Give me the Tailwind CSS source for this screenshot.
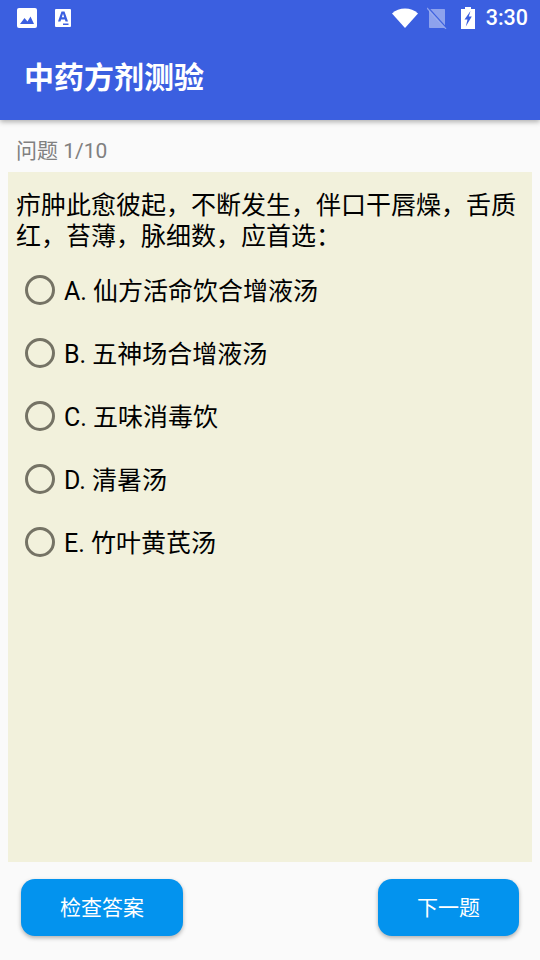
<!DOCTYPE html>
<html lang="zh">
<head>
  <meta charset="UTF-8">
  <meta name="viewport" content="width=device-width, initial-scale=1.0">
  <title>中药方剂测验</title>
  <script src="https://cdn.jsdelivr.net/npm/@tailwindcss/browser@4"></script>
</head>
<body class="w-[540px] h-[960px] overflow-hidden bg-[#fafafa] flex flex-col font-['Roboto','Noto_Sans_CJK_SC',sans-serif]">
  <!-- Header -->
  <header class="h-[120px] shrink-0 bg-[#3b5fe0] shadow-[0_2px_5px_rgba(0,0,0,0.3)] z-10 flex flex-col">
    <div class="h-[36px] pl-[17px] pr-[12px] flex items-center">
      <svg class="w-[20px] h-[20px]" viewBox="0 0 20 20"><rect width="20" height="20" rx="2" fill="#fff"/><path d="M3 16l4.500-6 3 3.500 3-5L17 16z" fill="#3b5fe0"/></svg>
      <svg class="w-[16px] h-[18px] ml-[18px]" viewBox="0 0 16 18"><rect width="16" height="18" rx="1" fill="#fff"/><path fill-rule="evenodd" d="M6.500 2.500h3L13 12.500h-2.500l-.6-2H6.100l-.6 2H3zM6.800 8.300h2.400L8 4.800z" fill="#3b5fe0"/><rect x="8" y="14.500" width="5.500" height="1.500" fill="#3b5fe0"/></svg>
      <div class="ml-auto flex items-center">
        <svg class="w-[26px] h-[20px]" viewBox="0 0 26 20"><path d="M0 5.500C3.500 2 8 .5 13 .5S22.500 2 26 5.500L13 20z" fill="#fff"/></svg>
        <svg class="w-[20px] h-[22px] ml-[9px]" viewBox="0 0 20 22"><path d="M2 2h15c.6 0 1 .4 1 1v18H3c-.6 0-1-.4-1-1z" fill="#fff" fill-opacity=".42"/><path d="M1 1l18 20" stroke="#3b5fe0" stroke-width="2"/><path d="M0 1l19 21" stroke="#fff" stroke-opacity=".42" stroke-width="1.200"/></svg>
        <svg class="w-[14px] h-[22px] ml-[14px]" viewBox="0 0 14 22"><path d="M4 0h6v2h4v20H0V2h4z" fill="#fff"/><path d="M9.500 4L3.500 12.500h3L4.800 19.500l6-10h-3z" fill="#3b5fe0"/></svg>
        <span class="ml-[11px] text-[21.500px] leading-none text-white font-medium">3:30</span>
      </div>
    </div>
    <h1 class="h-[84px] pl-[24px] pb-[2px] flex items-center text-[30px] font-bold text-white">中药方剂测验</h1>
  </header>

  <main class="flex-1 min-h-0 flex flex-col px-[8px]">
    <p class="h-[52px] shrink-0 pl-[8px] pt-[12px] flex items-center text-[21px] text-[#808080]">问题 1/10</p>

    <!-- Question card -->
    <section class="flex-1 min-h-0 bg-[#f2f1dc] pt-[18px]">
      <p class="px-[8px] text-[25px] leading-[31px] text-black">疖肿此愈彼起，不断发生，伴口干唇燥，舌质红，苔薄，脉细数，应首选：</p>
      <ul class="mt-[6px]">
        <li class="h-[63px] pl-[17px] flex items-center text-[25px] text-black">
          <span class="w-[30px] h-[30px] rounded-full border-[3px] border-[#757365]"></span>
          <span class="ml-[9px] pt-[4px]">A. 仙方活命饮合增液汤</span>
        </li>
        <li class="h-[63px] pl-[17px] flex items-center text-[25px] text-black">
          <span class="w-[30px] h-[30px] rounded-full border-[3px] border-[#757365]"></span>
          <span class="ml-[9px] pt-[4px]">B. 五神场合增液汤</span>
        </li>
        <li class="h-[63px] pl-[17px] flex items-center text-[25px] text-black">
          <span class="w-[30px] h-[30px] rounded-full border-[3px] border-[#757365]"></span>
          <span class="ml-[9px] pt-[4px]">C. 五味消毒饮</span>
        </li>
        <li class="h-[63px] pl-[17px] flex items-center text-[25px] text-black">
          <span class="w-[30px] h-[30px] rounded-full border-[3px] border-[#757365]"></span>
          <span class="ml-[9px] pt-[4px]">D. 清暑汤</span>
        </li>
        <li class="h-[63px] pl-[17px] flex items-center text-[25px] text-black">
          <span class="w-[30px] h-[30px] rounded-full border-[3px] border-[#757365]"></span>
          <span class="ml-[9px] pt-[4px]">E. 竹叶黄芪汤</span>
        </li>
      </ul>
    </section>

    <!-- Buttons -->
    <div class="h-[98px] shrink-0 px-[13px] flex items-start justify-between pt-[17px]">
      <button class="w-[162px] h-[57px] pt-[2px] rounded-[14px] bg-[#0393ee] text-white text-[21px] shadow-[0_2px_4px_rgba(0,0,0,0.3)]">检查答案</button>
      <button class="w-[141px] h-[57px] pt-[2px] rounded-[14px] bg-[#0393ee] text-white text-[21px] shadow-[0_2px_4px_rgba(0,0,0,0.3)]">下一题</button>
    </div>
  </main>
</body>
</html>
